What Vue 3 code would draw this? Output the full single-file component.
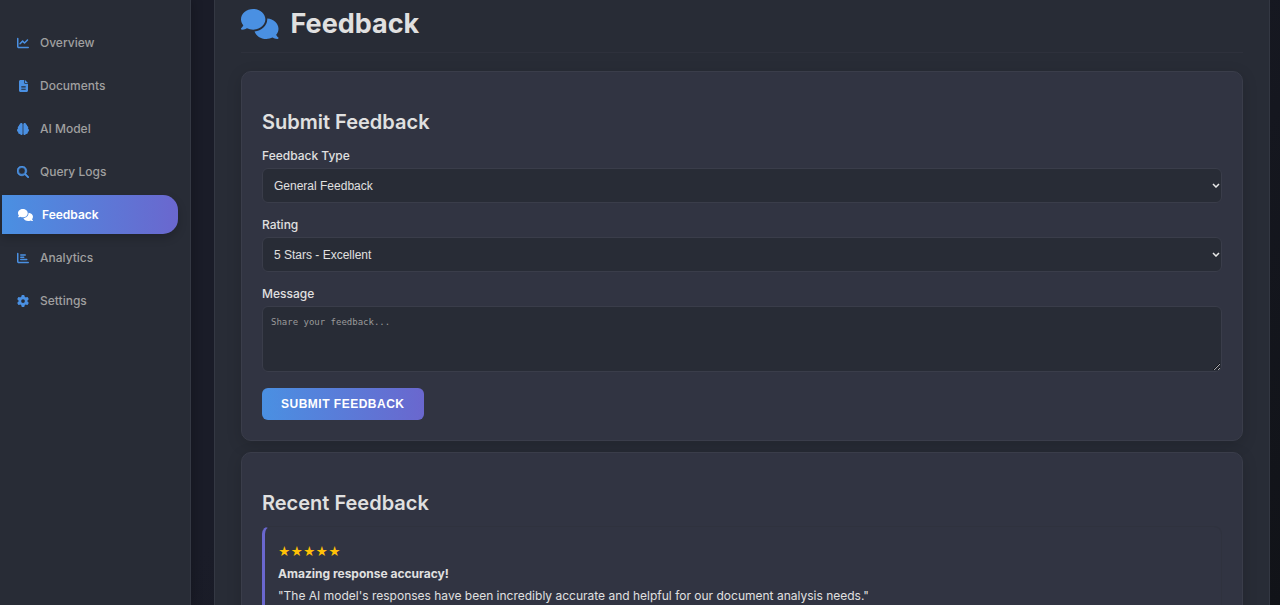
<script setup>
import { ref } from 'vue'

const comments = {
  box: '0 0 640 512',
  d: 'M208 352c114.9 0 208-78.8 208-176S322.9 0 208 0S0 78.8 0 176c0 38.6 14.7 74.3 39.6 103.4c-3.5 9.4-8.7 17.7-14.2 24.7c-4.8 6.2-9.7 11-13.3 14.3c-1.8 1.6-3.3 2.9-4.3 3.7c-.5 .4-.9 .7-1.1 .8l-.2 .2C1 327.2-1.4 334.4 .8 340.9S9.1 352 16 352c21.8 0 43.8-5.6 62.1-12.5c9.2-3.5 17.8-7.4 25.3-11.4C134.1 343.3 169.8 352 208 352zM448 176c0 112.3-99.1 196.9-216.5 207C255.8 457.4 336.4 512 432 512c38.2 0 73.9-8.7 104.7-23.9c7.5 4 16 7.9 25.2 11.4c18.3 6.9 40.3 12.5 62.1 12.5c6.9 0 13.1-4.5 15.2-11.1c2.1-6.6-.2-13.8-5.8-17.9l-.2-.2c-.2-.2-.6-.4-1.1-.8c-1-.8-2.5-2-4.3-3.7c-3.6-3.3-8.5-8.1-13.3-14.3c-5.5-7-10.7-15.4-14.2-24.7c24.9-29 39.6-64.7 39.6-103.4c0-92.8-84.9-168.9-192.6-175.5c.4 5.1 .6 10.3 .6 15.5z'
}

const navItems = [
  {
    label: 'Overview',
    box: '0 0 512 512',
    d: 'M64 64c0-17.7-14.3-32-32-32S0 46.3 0 64V400c0 44.2 35.8 80 80 80H480c17.7 0 32-14.3 32-32s-14.3-32-32-32H80c-8.8 0-16-7.2-16-16V64zm406.6 86.6c12.5-12.5 12.5-32.8 0-45.3s-32.8-12.5-45.3 0L320 210.7l-57.4-57.4c-12.5-12.5-32.8-12.5-45.3 0l-112 112c-12.5 12.5-12.5 32.8 0 45.3s32.8 12.5 45.3 0L240 221.3l57.4 57.4c12.5 12.5 32.8 12.5 45.3 0l128-128z'
  },
  {
    label: 'Documents',
    box: '0 0 384 512',
    d: 'M64 0C28.7 0 0 28.7 0 64V448c0 35.3 28.7 64 64 64H320c35.3 0 64-28.7 64-64V160H256c-17.7 0-32-14.3-32-32V0H64zM256 0V128H384L256 0zM112 256H272c8.8 0 16 7.2 16 16s-7.2 16-16 16H112c-8.8 0-16-7.2-16-16s7.2-16 16-16zm0 64H272c8.8 0 16 7.2 16 16s-7.2 16-16 16H112c-8.8 0-16-7.2-16-16s7.2-16 16-16zm0 64H272c8.8 0 16 7.2 16 16s-7.2 16-16 16H112c-8.8 0-16-7.2-16-16s7.2-16 16-16z'
  },
  {
    label: 'AI Model',
    box: '0 0 512 512',
    d: 'M184 0c30.9 0 56 25.1 56 56V456c0 30.9-25.1 56-56 56c-28.9 0-52.7-21.9-55.7-50.1c-5.2 1.4-10.7 2.1-16.3 2.1c-35.3 0-64-28.7-64-64c0-7.4 1.3-14.6 3.6-21.2C21.4 367.4 0 338.2 0 304c0-31.9 18.7-59.5 45.8-72.3C37.1 220.8 32 207 32 192c0-30.7 21.6-56.3 50.4-62.6C80.8 123.9 80 118 80 112c0-29.9 20.6-55.1 48.3-62.1C131.3 21.9 155.1 0 184 0zM328 0c28.9 0 52.6 21.9 55.7 49.9c27.8 7 48.3 32.1 48.3 62.1c0 6-.8 11.9-2.4 17.4c28.8 6.2 50.4 31.9 50.4 62.6c0 15-5.1 28.8-13.8 39.7C493.3 244.5 512 272.1 512 304c0 34.2-21.4 63.4-51.6 74.8c2.3 6.6 3.6 13.8 3.6 21.2c0 35.3-28.7 64-64 64c-5.6 0-11.1-.7-16.3-2.1c-3 28.2-26.8 50.1-55.7 50.1c-30.9 0-56-25.1-56-56V56c0-30.9 25.1-56 56-56z'
  },
  {
    label: 'Query Logs',
    box: '0 0 512 512',
    bold: true,
    d: 'M416 208c0 45.9-14.9 88.3-40 122.7L502.6 457.4c12.5 12.5 12.5 32.8 0 45.3s-32.8 12.5-45.3 0L330.7 376c-34.4 25.2-76.8 40-122.7 40C93.1 416 0 322.9 0 208S93.1 0 208 0S416 93.1 416 208zM208 352a144 144 0 1 0 0-288 144 144 0 1 0 0 288z'
  },
  { label: 'Feedback', active: true, ...comments },
  {
    label: 'Analytics',
    box: '0 0 512 512',
    d: 'M32 32c17.7 0 32 14.3 32 32V400c0 8.8 7.2 16 16 16H480c17.7 0 32 14.3 32 32s-14.3 32-32 32H80c-44.2 0-80-35.8-80-80V64C0 46.3 14.3 32 32 32zm96 96c0-17.7 14.3-32 32-32l192 0c17.7 0 32 14.3 32 32s-14.3 32-32 32l-192 0c-17.7 0-32-14.3-32-32zm32 64H288c17.7 0 32 14.3 32 32s-14.3 32-32 32H160c-17.7 0-32-14.3-32-32s14.3-32 32-32zm0 96H416c17.7 0 32 14.3 32 32s-14.3 32-32 32H160c-17.7 0-32-14.3-32-32s14.3-32 32-32z'
  },
  {
    label: 'Settings',
    box: '0 0 512 512',
    d: 'M495.9 166.6c3.2 8.7 .5 18.4-6.4 24.6l-43.3 39.4c1.1 8.3 1.7 16.8 1.7 25.4s-.6 17.1-1.7 25.4l43.3 39.4c6.9 6.2 9.6 15.9 6.4 24.6c-4.4 11.9-9.7 23.3-15.8 34.3l-4.7 8.1c-6.6 11-14 21.4-22.1 31.2c-5.9 7.2-15.7 9.6-24.5 6.8l-55.7-17.7c-13.4 10.3-28.2 18.9-44 25.4l-12.5 57.1c-2 9.1-9 16.3-18.2 17.8c-13.8 2.3-28 3.5-42.5 3.5s-28.7-1.2-42.5-3.5c-9.2-1.5-16.2-8.7-18.2-17.8l-12.5-57.1c-15.8-6.5-30.6-15.1-44-25.4L83.1 425.9c-8.8 2.8-18.6 .3-24.5-6.8c-8.1-9.8-15.5-20.2-22.1-31.2l-4.7-8.1c-6.1-11-11.4-22.4-15.8-34.3c-3.2-8.7-.5-18.4 6.4-24.6l43.3-39.4C64.6 273.1 64 264.6 64 256s.6-17.1 1.7-25.4L22.4 191.2c-6.9-6.2-9.6-15.9-6.4-24.6c4.4-11.9 9.7-23.3 15.8-34.3l4.7-8.1c6.6-11 14-21.4 22.1-31.2c5.9-7.2 15.7-9.6 24.5-6.8l55.7 17.7c13.4-10.3 28.2-18.9 44-25.4l12.5-57.1c2-9.1 9-16.3 18.2-17.8C227.3 1.2 241.5 0 256 0s28.7 1.2 42.5 3.5c9.2 1.5 16.2 8.7 18.2 17.8l12.5 57.1c15.8 6.5 30.6 15.1 44 25.4l55.7-17.7c8.8-2.8 18.6-.3 24.5 6.8c8.1 9.8 15.5 20.2 22.1 31.2l4.7 8.1c6.1 11 11.4 22.4 15.8 34.3zM256 336a80 80 0 1 0 0-160 80 80 0 1 0 0 160z'
  }
]

const type = ref('General Feedback')
const rating = ref('5 Stars - Excellent')
const message = ref('')
</script>

<template>
  <div class="shell">
    <nav class="sidebar">
      <a v-for="item in navItems" :key="item.label" href="#" class="nav-link" :class="{ active: item.active }">
        <span class="nav-icon" :class="{ bold: item.bold }"><svg :viewBox="item.box" aria-hidden="true"><path :d="item.d" /></svg></span>
        <span>{{ item.label }}</span>
      </a>
    </nav>

    <main class="panel">
      <header class="page-head">
        <svg :viewBox="comments.box" aria-hidden="true"><path :d="comments.d" /></svg>
        <h1>Feedback</h1>
      </header>

      <section class="card">
        <h2>Submit Feedback</h2>
        <form @submit.prevent>
          <div class="field">
            <label for="type">Feedback Type</label>
            <div class="select-wrap">
              <select id="type" v-model="type">
                <option>General Feedback</option>
              </select>
              <svg viewBox="0 0 8 5" aria-hidden="true"><path d="M1 1l3 3 3-3" /></svg>
            </div>
          </div>
          <div class="field">
            <label for="rating">Rating</label>
            <div class="select-wrap">
              <select id="rating" v-model="rating">
                <option>5 Stars - Excellent</option>
              </select>
              <svg viewBox="0 0 8 5" aria-hidden="true"><path d="M1 1l3 3 3-3" /></svg>
            </div>
          </div>
          <div class="field">
            <label for="message">Message</label>
            <textarea id="message" v-model="message" placeholder="Share your feedback..."></textarea>
          </div>
          <button type="submit">SUBMIT FEEDBACK</button>
        </form>
      </section>

      <section class="card">
        <h2>Recent Feedback</h2>
        <article class="entry">
          <div class="stars">★★★★★</div>
          <h3>Amazing response accuracy!</h3>
          <p>"The AI model's responses have been incredibly accurate and helpful for our document analysis needs."</p>
        </article>
      </section>
    </main>
  </div>
</template>

<style>
body {
  background: #151820;
}
</style>

<style scoped>
.shell {
  display: flex;
  height: 100vh;
  overflow: hidden;
  box-sizing: border-box;
  padding-right: 10px;
  gap: 23px;
  background: linear-gradient(135deg, #1a1c28 0%, #1a1c28 40%, #111318 100%);
  font-family: Inter, "Liberation Sans", sans-serif;
  font-size: 12px;
  color: #e0e0e0;
}

.sidebar {
  flex: 0 0 191px;
  box-sizing: border-box;
  display: flex;
  flex-direction: column;
  gap: 4px;
  padding: 23px 14px 0 0;
  background: #282c36;
  border-right: 1px solid #343843;
  box-shadow: 2px 0 10px rgba(0, 0, 0, 0.2);
}

.nav-link {
  display: flex;
  align-items: center;
  gap: 11px;
  height: 39px;
  padding-left: 17px;
  color: #a0a0a0;
  font-weight: 500;
  text-decoration: none;
}

.nav-icon {
  display: flex;
  justify-content: center;
  width: 12px;
  color: #4a90e2;
}

.nav-icon svg {
  flex: none;
  height: 12px;
  fill: currentColor;
}

.nav-icon.bold svg {
  stroke: currentColor;
  stroke-width: 26;
}

.nav-link.active {
  margin: 0 -2px 0 2px;
  border-radius: 0 15px 15px 0;
  background: linear-gradient(90deg, #4a90e2, #6a67ce);
  box-shadow: 0 4px 10px rgba(0, 0, 0, 0.2);
  color: #fff;
  font-weight: 600;
}

.active .nav-icon {
  color: #fff;
}

.panel {
  flex: 1;
  min-width: 0;
  padding: 0 26px;
  background: #282c36;
  border: solid #343843;
  border-width: 0 1px;
}

.page-head {
  display: flex;
  align-items: center;
  gap: 12px;
  height: 48px;
  padding-bottom: 4px;
  margin-bottom: 18px;
  border-bottom: 1px solid #2e313c;
}

.page-head svg {
  height: 30px;
  fill: #4a90e2;
}

h1,
h2,
h3,
p {
  margin: 0;
}

h1 {
  font-size: 27px;
  line-height: 34px;
  font-weight: 700;
}

.card {
  margin-bottom: 11px;
  padding: 38px 20px 20px;
  background: #313442;
  border: 1px solid #3a3d4a;
  border-radius: 10px;
  box-shadow: 0 4px 15px rgba(0, 0, 0, 0.15);
}

h2 {
  margin-bottom: 11px;
  font-size: 20px;
  line-height: 24px;
  font-weight: 600;
}

form {
  padding-top: 3px;
}

.field {
  display: flex;
  flex-direction: column;
  gap: 4px;
  margin-bottom: 14px;
}

label {
  line-height: 16px;
  font-weight: 500;
}

.select-wrap {
  display: grid;
  align-items: center;
}

.select-wrap > * {
  grid-area: 1 / 1;
}

.select-wrap svg {
  justify-self: end;
  width: 8px;
  height: 5px;
  margin-right: 2px;
  fill: none;
  stroke: #e8e8e8;
  stroke-width: 1.5;
  pointer-events: none;
}

select,
textarea {
  box-sizing: border-box;
  width: 100%;
  margin: 0;
  background: #282c36;
  border: 1px solid #3a3d4a;
  border-radius: 6px;
  color: #e0e0e0;
}

select {
  appearance: none;
  height: 35px;
  padding: 0 20px 0 11px;
  font: 12px "Liberation Sans", Arial, sans-serif;
}

textarea {
  height: 66px;
  padding: 10px 8px;
  font: 9px "DejaVu Sans Mono", monospace;
  resize: vertical;
}

textarea::placeholder {
  color: #9a9a9a;
}

button {
  display: block;
  height: 32px;
  margin-top: 16px;
  padding: 0 19px;
  border: 0;
  border-radius: 6px;
  background: linear-gradient(90deg, #4a90e2, #6a67ce);
  color: #fff;
  font: 700 12px "Liberation Sans", Arial, sans-serif;
  letter-spacing: 0.5px;
}

.entry {
  padding: 14px 13px;
  border: 1px solid #2f323e;
  border-left: 3px solid #6a67ce;
  border-radius: 8px;
}

.stars {
  color: #ffc107;
  font-size: 12px;
  line-height: 22px;
}

h3,
p {
  font-size: 12px;
  line-height: 22px;
}

h3 {
  font-weight: 700;
}
</style>
